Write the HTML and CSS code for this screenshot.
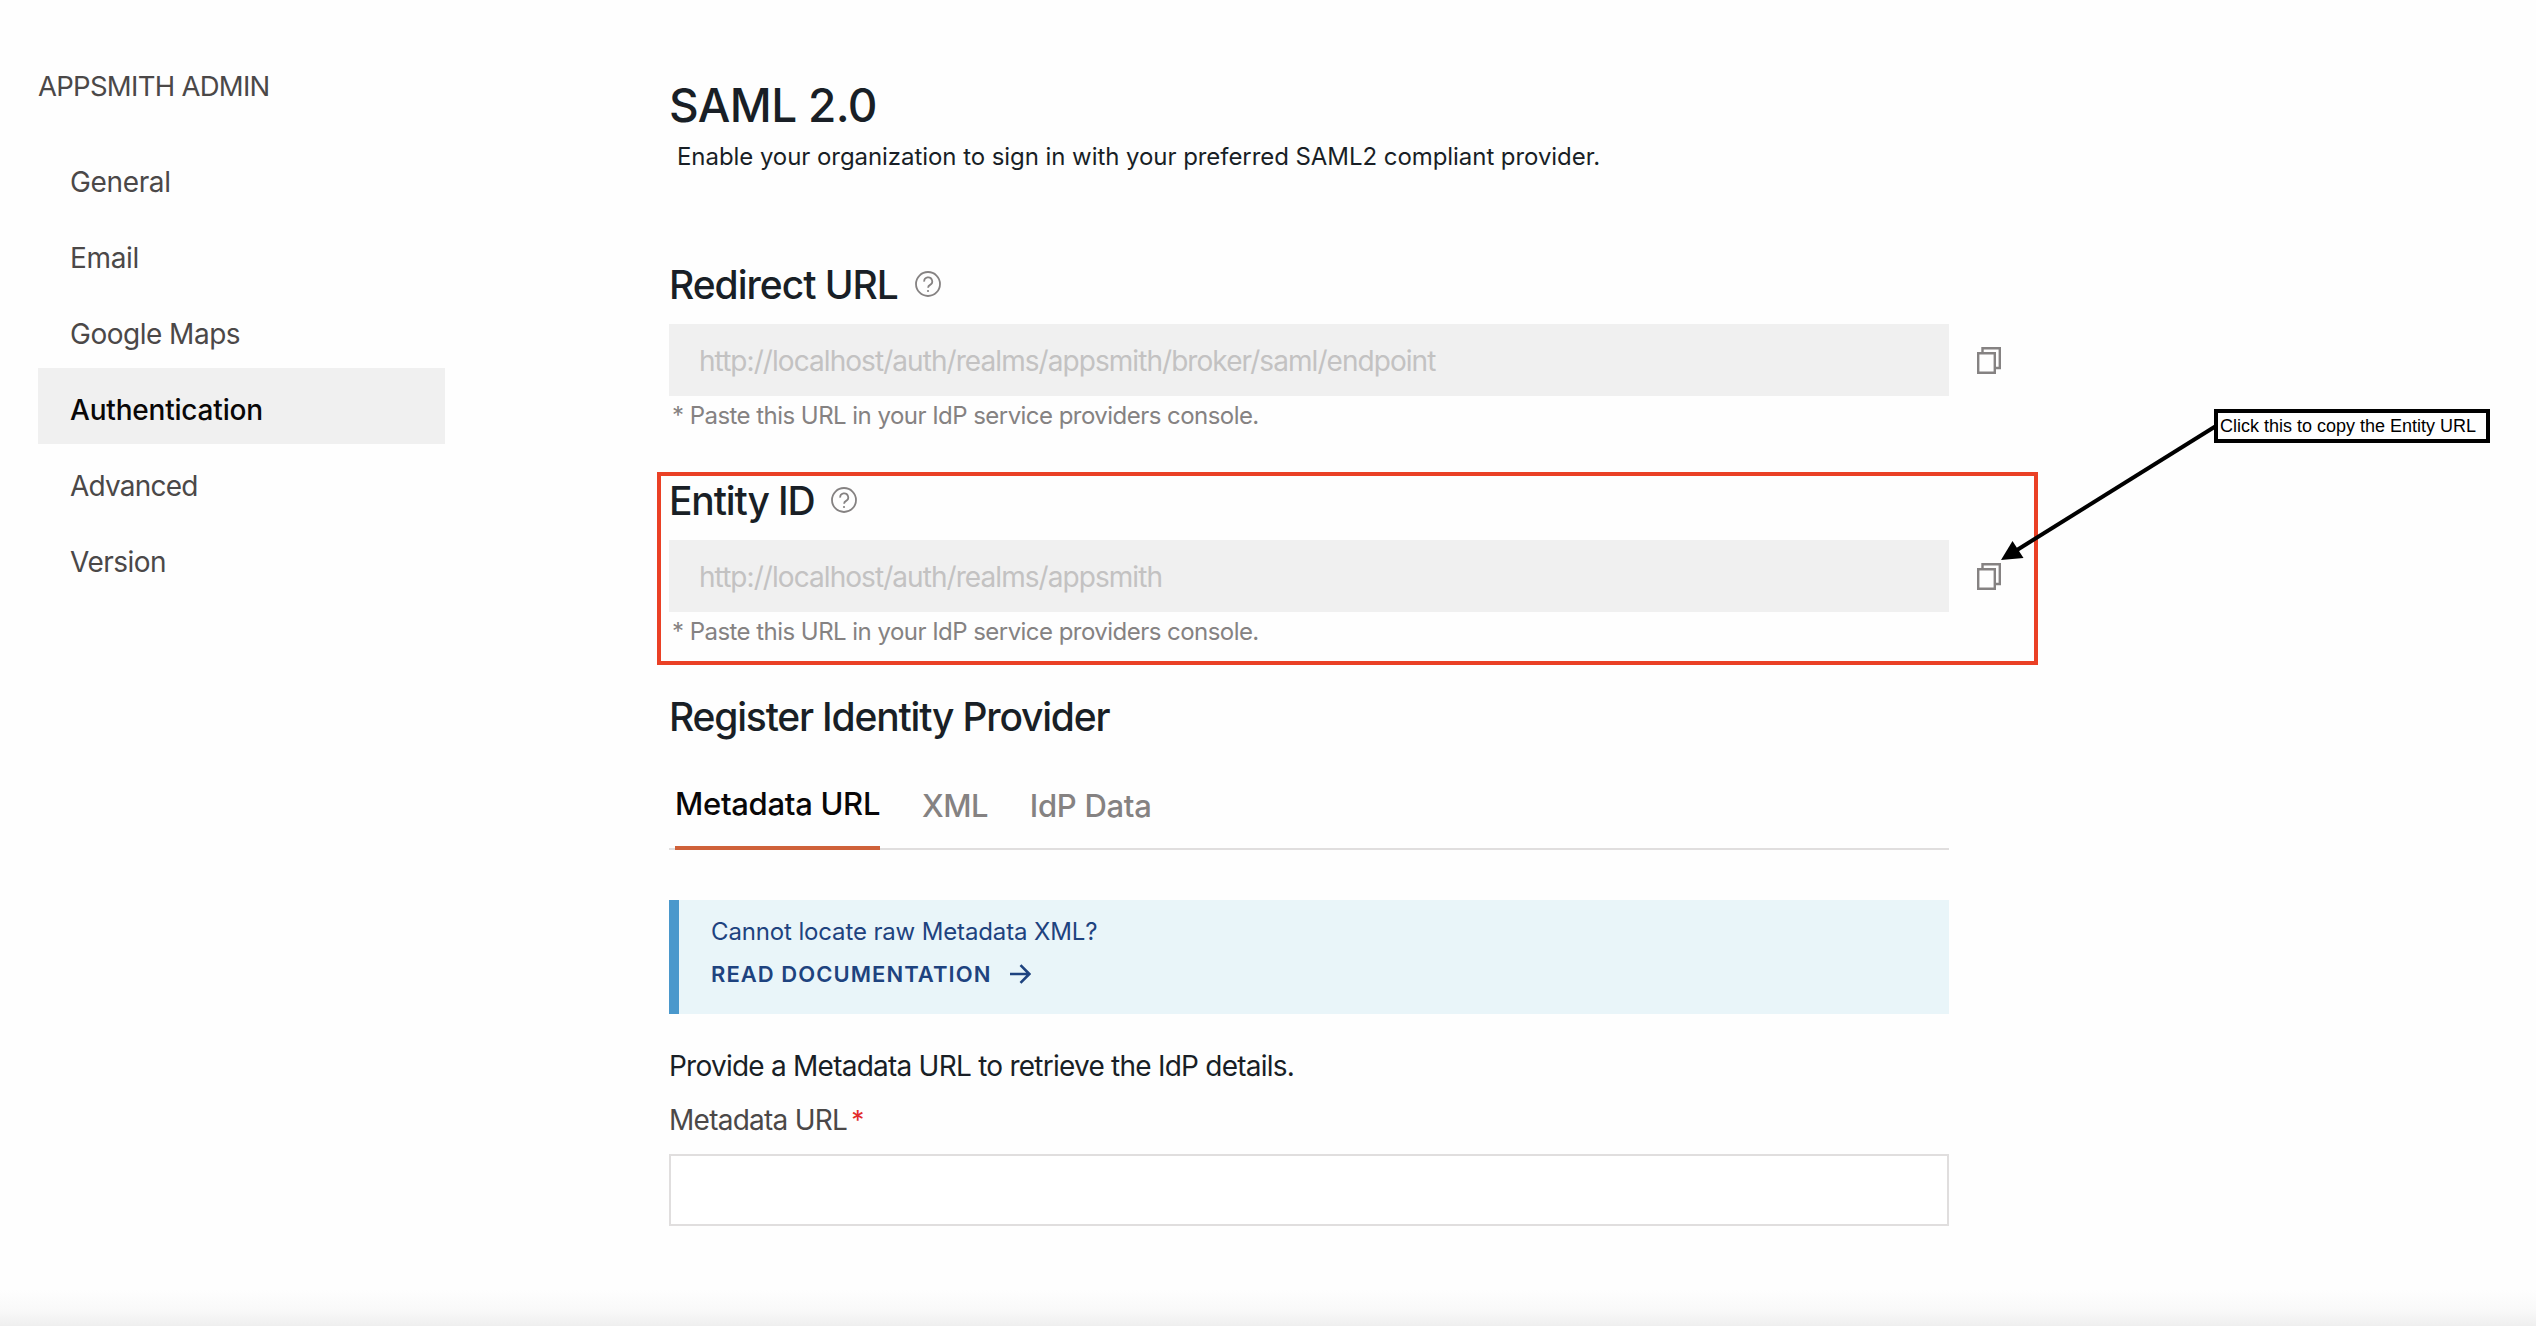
FILE: index.html
```html
<!DOCTYPE html>
<html lang="en">
<head>
<meta charset="utf-8">
<title>SAML 2.0 - Appsmith Admin</title>
<link rel="stylesheet" href="styles.css">
</head>
<body>
<div class="page">
  <aside class="sidebar">
    <h2 class="sidebar-title">APPSMITH ADMIN</h2>
    <nav class="menu">
      <a class="menu-item general">General</a>
      <a class="menu-item email">Email</a>
      <a class="menu-item maps">Google Maps</a>
      <a class="menu-item active">Authentication</a>
      <a class="menu-item advanced">Advanced</a>
      <a class="menu-item version">Version</a>
    </nav>
  </aside>
  <main class="content">
    <h1 class="title"><span>SAML 2.0</span></h1>
    <p class="subtitle"><span>Enable your organization to sign in with your preferred SAML2 compliant provider.</span></p>

    <section class="field">
      <h3 class="heading"><span class="h-redirect">Redirect URL</span>
        <svg class="help" viewBox="0 0 26 26"><circle cx="13" cy="13" r="12"/><path d="M9.2 10.6a4 4 0 1 1 5.9 3.3c-1.4.8-2 1.4-2 2.9"/><circle class="dot" cx="13" cy="20" r="1.1"/></svg>
      </h3>
      <div class="row">
        <div class="readonly"><span class="url-redirect">http://localhost/auth/realms/appsmith/broker/saml/endpoint</span></div>
        <svg class="copy" viewBox="0 0 24 27"><path d="M5.5 6.5V1.2H22.8V21H18.2M1.2 6.3H17.8V25.7H1.2Z"/></svg>
      </div>
      <p class="hint"><span>* Paste this URL in your IdP service providers console.</span></p>
    </section>

    <section class="field marked">
      <h3 class="heading"><span class="h-entity">Entity ID</span>
        <svg class="help" viewBox="0 0 26 26"><circle cx="13" cy="13" r="12"/><path d="M9.2 10.6a4 4 0 1 1 5.9 3.3c-1.4.8-2 1.4-2 2.9"/><circle class="dot" cx="13" cy="20" r="1.1"/></svg>
      </h3>
      <div class="row">
        <div class="readonly"><span class="url-entity">http://localhost/auth/realms/appsmith</span></div>
        <svg class="copy" viewBox="0 0 24 27"><path d="M5.5 6.5V1.2H22.8V21H18.2M1.2 6.3H17.8V25.7H1.2Z"/></svg>
      </div>
      <p class="hint"><span>* Paste this URL in your IdP service providers console.</span></p>
    </section>

    <h3 class="heading"><span class="h-register">Register Identity Provider</span></h3>
    <div class="tabs">
      <a class="tab selected"><span class="t-url">Metadata URL</span></a>
      <a class="tab"><span class="t-xml">XML</span></a>
      <a class="tab"><span class="t-idp">IdP Data</span></a>
    </div>
    <div class="callout">
      <p class="callout-text"><span>Cannot locate raw Metadata XML?</span></p>
      <a class="callout-link"><span>READ DOCUMENTATION</span>
        <svg class="arrow" viewBox="0 0 22 20"><path d="M1 10H20M11.5 1.2L20.3 10L11.5 18.8"/></svg>
      </a>
    </div>
    <p class="intro"><span>Provide a Metadata URL to retrieve the IdP details.</span></p>
    <label class="label"><span class="label-text">Metadata URL</span><span class="required">*</span></label>
    <div class="input"></div>
  </main>
  <footer class="footer"></footer>
  <svg class="pointer" viewBox="0 0 220 140"><path class="shaft" d="M216 6L17 130"/><path d="M1 140L12.5 121L23.5 138Z"/></svg>
  <div class="note"><span>Click this to copy the Entity URL</span></div>
</div>
</body>
</html>
```
FILE: styles.css
```css
*, *::before { box-sizing: border-box; }
body { margin: 0; background: #fefefe; font-family: Inter, "Liberation Sans", sans-serif; color: #191f26; }
h1, h2, h3, p { margin: 0; font-weight: 400; }
span { white-space: nowrap; }
.page { position: relative; display: grid; grid-template-columns: 669px 1fr; grid-template-rows: 1fr 42px; width: 2536px; height: 1332px; overflow: hidden; }

.sidebar { padding: 68px 0 0 38px; }
.sidebar-title { font-size: 27.5px; line-height: 36px; color: #4b4848; letter-spacing: -0.72px; white-space: nowrap; }
.menu { display: flex; flex-direction: column; width: 407px; margin-top: 36px; }
.menu-item { height: 76px; padding-left: 32px; line-height: 84px; font-size: 28px; color: #4b4848; white-space: nowrap; }
.menu-item.active { background: #f0f0f0; color: #090707; font-weight: 500; letter-spacing: -0.2px; }
.general, .email { letter-spacing: -0.35px; }
.maps { letter-spacing: -0.5px; }
.advanced { letter-spacing: -0.78px; }
.version { letter-spacing: -0.5px; }

.content { display: flex; flex-direction: column; align-items: flex-start; padding-top: 76px; }
.title { font-size: 46px; line-height: 59px; font-weight: 500; letter-spacing: -0.65px; }
.subtitle { padding-left: 8px; line-height: 36px; margin-top: 4px; font-size: 24px; letter-spacing: -0.06px; }
.field { width: 1332px; }
.subtitle + .field { margin-top: 85px; }
.heading { display: flex; align-items: center; gap: 17px; height: 48px; font-size: 39px; font-weight: 500; letter-spacing: -1.03px; }
.h-entity { letter-spacing: -1.15px; }
.h-register { letter-spacing: -1.2px; }
.help { width: 26px; height: 26px; fill: none; stroke: #858282; stroke-width: 1.8; }
.help .dot { fill: #858282; stroke: none; }
.row { display: flex; align-items: center; gap: 28px; margin-top: 16px; }
.readonly { display: flex; align-items: center; width: 1280px; height: 72px; padding: 2px 30px 0; background: #f0f0f0; color: #c3c2c2; font-size: 28px; letter-spacing: -0.94px; }
.copy { width: 24px; height: 27px; fill: none; stroke: #858282; stroke-width: 2.4; }
.hint { padding-left: 3px; line-height: 40px; font-size: 24px; color: #858282; letter-spacing: -0.54px; }
.marked { position: relative; margin: 40px 0; }
.marked::before { content: ""; position: absolute; left: -12px; top: -4px; width: 1381px; height: 193px; border: 4px solid #ea4025; }
.tabs { display: flex; width: 1280px; height: 92px; margin-top: 18px; padding: 0 6px; gap: 42px; border-bottom: 2px solid #e0dede; font-size: 31px; font-weight: 500; letter-spacing: -0.3px; }
.tab { display: flex; align-items: center; height: 92px; padding-top: 2px; color: #858282; }
.t-xml { letter-spacing: -0.6px; }
.tab.selected { color: #090707; border-bottom: 4px solid #cf6139; }
.callout { width: 1280px; height: 114px; margin-top: 50px; padding: 14px 0 0 32px; border-left: 10px solid #4a98cc; background: #e9f5f9; color: #1e437f; }
.callout-text { font-size: 24px; line-height: 36px; letter-spacing: -0.14px; }
.callout-link { display: flex; align-items: center; gap: 18px; height: 36px; margin-top: 6px; font-size: 22px; font-weight: 600; letter-spacing: 1.05px; }
.arrow { width: 22px; height: 20px; fill: none; stroke: #1e437f; stroke-width: 2.6; }
.intro { margin-top: 34px; line-height: 36px; font-size: 28px; letter-spacing: -0.76px; }
.label { display: flex; gap: 4px; margin-top: 18px; line-height: 36px; font-size: 28px; color: #4b4848; letter-spacing: -0.74px; }
.required { color: #e22c2c; font-size: 26px; }
.input { width: 1280px; height: 72px; margin-top: 16px; border: 2px solid #e0dede; background: #fff; }
.footer { grid-column: 1 / -1; border-bottom: 6px solid #fff; background: linear-gradient(#fefefe, #f9f9f9 55%, #efefef); }

.pointer { position: absolute; left: 2000px; top: 420px; width: 220px; height: 140px; }
.shaft { fill: none; stroke: #000; stroke-width: 4; }
.note { position: absolute; left: 2214px; top: 409px; width: 276px; height: 34px; padding-left: 2px; border: 4px solid #000; background: #fff; color: #000; font: 18px/27px "Liberation Sans", Arial, sans-serif; }
```
